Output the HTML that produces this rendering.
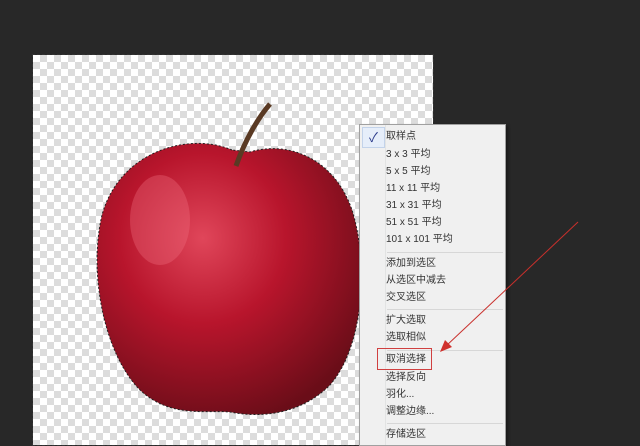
<!DOCTYPE html>
<html><head><meta charset="utf-8"><style>
body{margin:0;width:640px;height:437px;background:#282828;overflow:hidden;position:relative;font-family:"Liberation Sans","Noto Sans CJK SC",sans-serif}
.cv{position:absolute;left:33px;top:55px;width:400px;height:390px;background-color:#fff;background-image:linear-gradient(45deg,#dcdcdc 25%,transparent 25%,transparent 75%,#dcdcdc 75%),linear-gradient(45deg,#dcdcdc 25%,transparent 25%,transparent 75%,#dcdcdc 75%);background-size:14px 14px;background-position:0 0,7px 7px;outline:1px dashed #333}
.menu{position:absolute;left:359px;top:124px;width:145px;height:320px;background:#f0f0f0;border:1px solid #a0a0a0;box-shadow:2px 2px 3px rgba(0,0,0,.4)}
.gut{position:absolute;left:0;top:0;width:25px;height:100%;background:#f0f0f0;border-right:1px solid #e2e3e3}
.it{position:absolute;left:26px;font-size:10px;color:#333;line-height:12px}
.sep{position:absolute;left:27px;right:2px;height:1px;background:#d7d7d7}
</style></head><body>
<div class="cv"></div>
<svg style="position:absolute;left:0;top:0" width="640" height="437">
<defs><radialGradient id="g" cx="0.4" cy="0.35" r="0.7"><stop offset="0" stop-color="#e0465a"/><stop offset="0.45" stop-color="#b8152c"/><stop offset="1" stop-color="#6a0d18"/></radialGradient></defs>
<path d="M232 150 C190 132 120 150 102 215 C88 275 105 355 140 390 C170 418 205 410 230 412 C260 418 300 415 330 385 C365 345 368 260 352 210 C335 160 290 140 250 152 Z" fill="url(#g)" stroke="#222" stroke-width="1" stroke-dasharray="2 2"/>
<path d="M236 166 C245 140 258 118 270 104" stroke="#5a3a24" stroke-width="5" fill="none"/>
<ellipse cx="160" cy="220" rx="30" ry="45" fill="#f07080" opacity=".35"/>
</svg>
<div class="menu"><div class="gut"></div>
<div style="position:absolute;left:2px;top:2px;width:21px;height:19px;background:#e6eefa;border:1px solid #c3d3ea;color:#2a3a8a;font-size:13px;text-align:center;line-height:19px">✓</div>
<div class="it" style="top:6px">取样点</div>
<div class="it" style="top:24px">3 x 3 平均</div>
<div class="it" style="top:41px">5 x 5 平均</div>
<div class="it" style="top:58px">11 x 11 平均</div>
<div class="it" style="top:75px">31 x 31 平均</div>
<div class="it" style="top:92px">51 x 51 平均</div>
<div class="it" style="top:109px">101 x 101 平均</div>
<div class="sep" style="top:127px"></div>
<div class="it" style="top:133px">添加到选区</div>
<div class="it" style="top:150px">从选区中减去</div>
<div class="it" style="top:167px">交叉选区</div>
<div class="sep" style="top:184px"></div>
<div class="it" style="top:190px">扩大选取</div>
<div class="it" style="top:207px">选取相似</div>
<div class="sep" style="top:225px"></div>
<div class="it" style="top:229px">取消选择</div>
<div style="position:absolute;left:17px;top:223px;width:53px;height:20px;border:1px solid #d04040"></div>
<div class="it" style="top:247px">选择反向</div>
<div class="it" style="top:264px">羽化...</div>
<div class="it" style="top:281px">调整边缘...</div>
<div class="sep" style="top:298px"></div>
<div class="it" style="top:304px">存储选区</div>
</div>
<svg style="position:absolute;left:0;top:0" width="640" height="437">
<line x1="578" y1="222" x2="446" y2="346" stroke="#c9302c" stroke-width="1"/>
<polygon points="440,352 445,340 452,347" fill="#d0302c"/>
</svg>
</body></html>
